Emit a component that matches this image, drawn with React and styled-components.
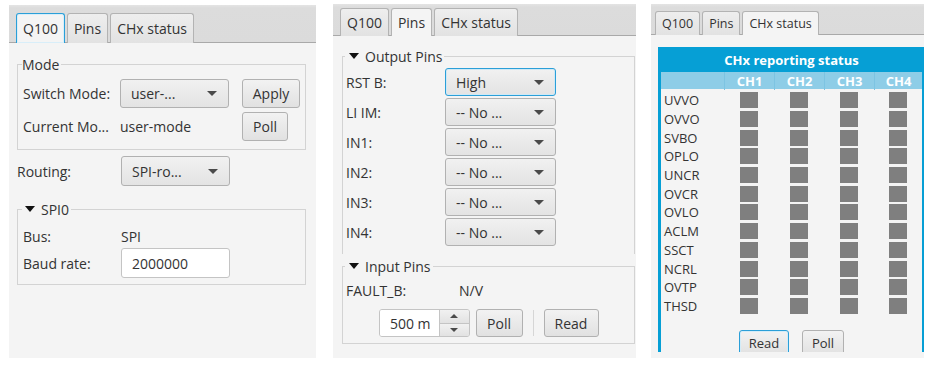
import React from 'react';
import styled, { createGlobalStyle } from 'styled-components';

const GlobalStyle = createGlobalStyle`
  html, body {
    margin: 0;
    padding: 0;
    background: #ffffff;
  }
  body {
    font-family: "Open Sans", "Noto Sans", sans-serif;
    color: #333333;
  }
`;

const channels = ['CH1', 'CH2', 'CH3', 'CH4'];
const statusRows = ['UVVO', 'OVVO', 'SVBO', 'OPLO', 'UNCR', 'OVCR', 'OVLO', 'ACLM', 'SSCT', 'NCRL', 'OVTP', 'THSD'];
const outputPins = [
    { name: 'RST B:', value: 'High', focus: true },
    { name: 'LI IM:', value: '-- No ...' },
    { name: 'IN1:', value: '-- No ...' },
    { name: 'IN2:', value: '-- No ...' },
    { name: 'IN3:', value: '-- No ...' },
    { name: 'IN4:', value: '-- No ...' },
];

const TabBar = ({ tabs, active, focus, $h, $pl, $tabH, $fs }) => (
    <TabHeader $h={$h} $pl={$pl}>
        {tabs.map((t, i) => (
            <Tab key={t} $active={i === active} $focus={focus && i === active} $tabH={$tabH} $fs={$fs}>{t}</Tab>
        ))}
    </TabHeader>
);

const Combo = ({ children, $w, $h, $focus }) => (
    <ComboBox $w={$w} $h={$h} $focus={$focus}>
        <span>{children}</span>
        <Arrow />
    </ComboBox>
);

const ModePanel = () => (
    <Panel $w={307} $top={5} $h={353}>
        <TabBar tabs={['Q100', 'Pins', 'CHx status']} active={0} focus $h={38} $pl={7} $tabH={30} />
        <Content $pad="11px 10px 0 8px">
            <Group>
                <Legend>Mode</Legend>
                <ModeGrid>
                    <span>Switch Mode:</span>
                    <Combo $w={109} $h={29}>user-...</Combo>
                    <Button $w={58} $h={29}>Apply</Button>
                    <span>Current Mo...</span>
                    <span>user-mode</span>
                    <Button $w={46} $h={29}>Poll</Button>
                </ModeGrid>
            </Group>
            <RoutingRow>
                <span>Routing:</span>
                <Combo $w={109} $h={30}>SPI-ro...</Combo>
            </RoutingRow>
            <Group $mt={13} $pb={6}>
                <Legend $pl={3}><Caret />SPI0</Legend>
                <SpiGrid>
                    <span>Bus:</span>
                    <span>SPI</span>
                    <span>Baud rate:</span>
                    <TextField $w={109} $h={30}>2000000</TextField>
                </SpiGrid>
            </Group>
        </Content>
    </Panel>
);

const PinsPanel = () => (
    <Panel $w={303} $top={4} $h={354}>
        <TabBar tabs={['Q100', 'Pins', 'CHx status']} active={1} $h={32} $pl={7} $tabH={28} />
        <Content $pad="10px 1px 0 9px">
            <Group $px={3} $pb={8} $open>
                <Legend $pl={4}><Caret />Output Pins</Legend>
                <PinGrid>
                    {outputPins.map(p => (
                        <React.Fragment key={p.name}>
                            <span>{p.name}</span>
                            <Combo $w={111} $h={28} $focus={p.focus}>{p.value}</Combo>
                        </React.Fragment>
                    ))}
                </PinGrid>
            </Group>
            <Group $px={3} $pb={6} $mt={2}>
                <Legend $pl={4}><Caret />Input Pins</Legend>
                <FaultRow>
                    <span>FAULT_B:</span>
                    <span>N/V</span>
                </FaultRow>
                <PollBar>
                    <Spinner>
                        <SpinValue>500 m</SpinValue>
                        <SpinButtons>
                            <SpinBtn><SpinArrow $up /></SpinBtn>
                            <SpinBtn><SpinArrow /></SpinBtn>
                        </SpinButtons>
                    </Spinner>
                    <Button $w={47} $h={28}>Poll</Button>
                    <VSep />
                    <Button $w={55} $h={28}>Read</Button>
                </PollBar>
            </Group>
        </Content>
    </Panel>
);

const StatusPanel = () => (
    <Panel $w={273} $top={4} $h={354} $fs={13}>
        <TabBar tabs={['Q100', 'Pins', 'CHx status']} active={2} $h={31} $pl={4} $tabH={24} $fs={12.5} />
        <Content $pad="12px 0 6px 7px">
            <StatusBox>
                <StatusTitle>CHx reporting status</StatusTitle>
                <StatusHead>
                    <HeadCell />
                    {channels.map(c => <HeadCell key={c}>{c}</HeadCell>)}
                </StatusHead>
                <StatusGrid>
                    {statusRows.map(r => (
                        <React.Fragment key={r}>
                            <RowLabel>{r}</RowLabel>
                            {channels.map(c => <Cell key={c}><Led /></Cell>)}
                        </React.Fragment>
                    ))}
                </StatusGrid>
                <StatusButtons>
                    <Button $w={50} $h={26} $focus $fs={13}>Read</Button>
                    <Button $w={42} $h={26} $fs={13}>Poll</Button>
                </StatusButtons>
            </StatusBox>
        </Content>
    </Panel>
);

const App = () => (
    <>
        <GlobalStyle />
        <Screen>
            <ModePanel />
            <PinsPanel />
            <StatusPanel />
        </Screen>
    </>
);

export default App;


// layout

const Screen = styled.div`
    display: flex;
    align-items: flex-start;
    gap: 17px;
    padding-left: 9px;
    height: 365px;
    box-sizing: border-box;

    & > :nth-child(3) {
        margin-left: -2px;
    }
`;

const Panel = styled.div`
    width: ${p => p.$w}px;
    height: ${p => p.$h}px;
    margin-top: ${p => p.$top}px;
    display: flex;
    flex-direction: column;
    background: #f4f4f4;
    overflow: hidden;
    font-size: ${p => p.$fs || 14}px;
    flex: none;
`;

const TabHeader = styled.div`
    display: flex;
    align-items: flex-end;
    gap: 2px;
    height: ${p => p.$h}px;
    padding-left: ${p => p.$pl}px;
    box-sizing: border-box;
    background: linear-gradient(#e4e4e4 0, #dcdcdc 3px, #dbdbdb 100%);
    box-shadow: inset 0 -1px 0 #a9a9a9;
    flex: none;
`;

const Tab = styled.div`
    position: relative;
    height: ${p => p.$tabH}px;
    padding: 0 6px;
    box-sizing: border-box;
    display: flex;
    align-items: center;
    font-size: ${p => p.$fs || 14}px;
    color: #333;
    border: 1px solid #b3b3b3;
    border-bottom: none;
    border-radius: 3px 3px 0 0;
    background: ${p => p.$active ? '#f4f4f4' : 'linear-gradient(#eeeeee, #e2e2e2)'};
    ${p => p.$focus && `
        border-color: #2a9fd8;
        box-shadow: inset 0 0 0 1px #d8eef9;
        background: #f4f4f4;
    `}
`;

const Content = styled.div`
    flex: 1;
    min-height: 0;
    display: flex;
    flex-direction: column;
    padding: ${p => p.$pad};
`;

const Group = styled.fieldset`
    margin: ${p => p.$mt || 0}px 0 0;
    padding: 0 ${p => p.$px || 5}px ${p => p.$pb || 8}px;
    border: 1px solid #d3d3d3;
    ${p => p.$open && 'border-bottom: none;'}
    min-width: 0;
`;

const Legend = styled.legend`
    display: flex;
    align-items: center;
    height: 20px;
    padding: 0 2px 0 ${p => p.$pl || 0}px;
    margin-left: -1px;
`;

const Caret = styled.span`
    width: 0;
    height: 0;
    border-left: 5px solid transparent;
    border-right: 5px solid transparent;
    border-top: 6px solid #111;
    margin-right: 6px;
`;

const ModeGrid = styled.div`
    display: grid;
    grid-template-columns: 97px 122px auto;
    grid-auto-rows: 29px;
    row-gap: 4px;
    align-items: center;
    margin-top: 5px;
`;

const RoutingRow = styled.div`
    display: grid;
    grid-template-columns: 104px auto;
    align-items: center;
    margin-top: 6px;
`;

const SpiGrid = styled.div`
    display: grid;
    grid-template-columns: 98px auto;
    grid-template-rows: 24px 30px;
    align-items: center;
    margin-top: 5px;
`;

const PinGrid = styled.div`
    display: grid;
    grid-template-columns: 99px auto;
    grid-auto-rows: 28px;
    row-gap: 2px;
    align-items: center;
    margin-top: 2px;
`;

const FaultRow = styled.div`
    display: grid;
    grid-template-columns: 113px auto;
    height: 22px;
    align-items: center;
    margin-top: 3px;
`;

const PollBar = styled.div`
    display: flex;
    justify-content: center;
    align-items: center;
    gap: 6px;
    margin-top: 8px;
`;

// controls

const ComboBox = styled.div`
    width: ${p => p.$w}px;
    height: ${p => p.$h}px;
    box-sizing: border-box;
    display: flex;
    align-items: center;
    justify-content: space-between;
    padding: 0 11px 0 10px;
    border: 1px solid #b1b1b1;
    border-radius: 3px;
    background: linear-gradient(#f1f1f1, #e3e3e3);
    color: #333;
    ${p => p.$focus && `
        border-color: #2b9fd8;
        box-shadow: inset 0 0 0 1px #cfe9f6;
    `}
`;

const Arrow = styled.span`
    width: 0;
    height: 0;
    border-left: 5px solid transparent;
    border-right: 5px solid transparent;
    border-top: 5px solid #4a4a4a;
`;

const Button = styled.div`
    width: ${p => p.$w}px;
    height: ${p => p.$h}px;
    box-sizing: border-box;
    display: flex;
    align-items: center;
    justify-content: center;
    border: 1px solid #b1b1b1;
    border-radius: 3px;
    background: linear-gradient(#f2f2f2, #e1e1e1);
    font-size: ${p => p.$fs || 14}px;
    color: #333;
    ${p => p.$focus && `
        border-color: #2b9fd8;
        box-shadow: inset 0 0 0 1px #d4ecf8;
    `}
`;

const TextField = styled.div`
    width: ${p => p.$w}px;
    height: ${p => p.$h}px;
    box-sizing: border-box;
    display: flex;
    align-items: center;
    padding-left: 10px;
    background: #ffffff;
    border: 1px solid #c4c4c4;
    border-radius: 3px;
`;

const Spinner = styled.div`
    display: flex;
    height: 28px;
    width: 91px;
    border: 1px solid #c4c4c4;
    border-radius: 3px;
    box-sizing: border-box;
    overflow: hidden;
`;

const SpinValue = styled.div`
    flex: 1;
    display: flex;
    align-items: center;
    justify-content: flex-end;
    padding-right: 8px;
    background: #ffffff;
`;

const SpinButtons = styled.div`
    width: 29px;
    display: flex;
    flex-direction: column;
    border-left: 1px solid #c4c4c4;
`;

const SpinBtn = styled.div`
    flex: 1;
    display: flex;
    align-items: center;
    justify-content: center;
    background: linear-gradient(#f1f1f1, #e2e2e2);
    & + & {
        border-top: 1px solid #c4c4c4;
    }
`;

const SpinArrow = styled.span`
    width: 0;
    height: 0;
    border-left: 4px solid transparent;
    border-right: 4px solid transparent;
    ${p => p.$up ? 'border-bottom: 4px solid #4a4a4a;' : 'border-top: 4px solid #4a4a4a;'}
`;

const VSep = styled.div`
    width: 1px;
    height: 26px;
    background: #d6d6d6;
    margin: 0 4px;
`;

// status table

const StatusBox = styled.div`
    flex: 1;
    min-height: 0;
    overflow: hidden;
    border-left: 3px solid #069fd5;
    border-right: 2px solid #069fd5;
    display: flex;
    flex-direction: column;
`;

const StatusTitle = styled.div`
    height: 25px;
    display: flex;
    align-items: center;
    justify-content: center;
    background: #069fd5;
    color: #ffffff;
    font-weight: 700;
    font-size: 13px;
    flex: none;
`;

const StatusHead = styled.div`
    display: grid;
    grid-template-columns: 63px 50px 50px 50px 1fr;
    height: 17px;
    background: #8ecde7;
    flex: none;
`;

const HeadCell = styled.div`
    display: flex;
    align-items: center;
    justify-content: center;
    color: #ffffff;
    font-weight: 700;
    font-size: 13px;
    & + & {
        border-left: 1px solid #7dc4e2;
    }
`;

const StatusGrid = styled.div`
    display: grid;
    grid-template-columns: 63px 50px 50px 50px 1fr;
    grid-auto-rows: 18.7px;
    margin-top: 2px;
    flex: none;
`;

const RowLabel = styled.div`
    display: flex;
    align-items: center;
    padding-left: 3px;
    font-size: 13px;
    color: #333;
`;

const Cell = styled.div`
    display: flex;
    align-items: center;
    justify-content: center;
`;

const Led = styled.div`
    width: 18px;
    height: 16px;
    background: #7f7f7f;
`;

const StatusButtons = styled.div`
    display: flex;
    justify-content: center;
    gap: 13px;
    margin-top: 15px;
    flex: none;
`;
